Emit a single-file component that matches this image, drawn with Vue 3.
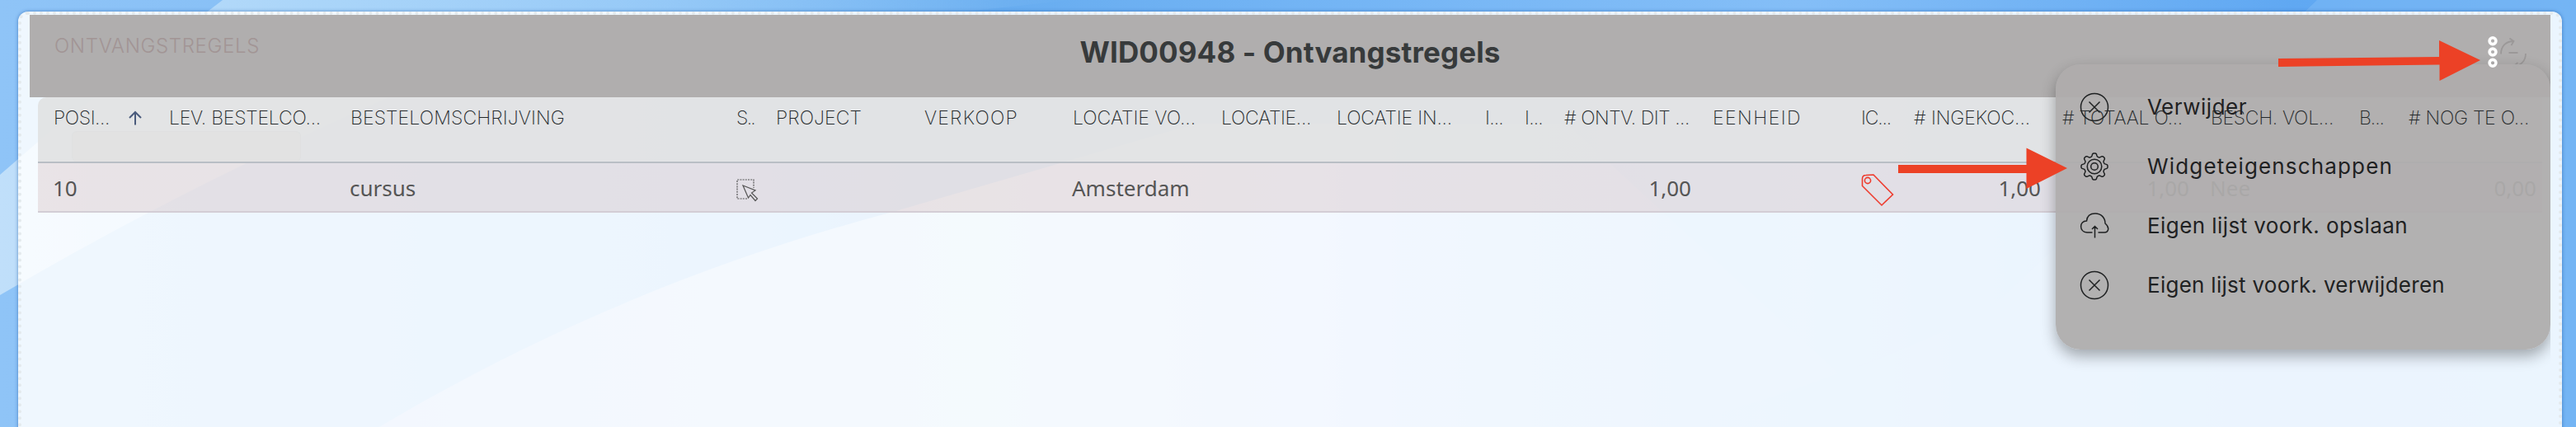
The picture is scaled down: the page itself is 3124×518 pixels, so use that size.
<template>
  <div class="page">
    <svg class="backdrop" viewBox="0 0 3124 518" preserveAspectRatio="none">
      <defs>
        <linearGradient id="sky" x1="0" y1="0" x2="1" y2="0">
          <stop offset="0" stop-color="#8fc4f7" />
          <stop offset="0.26" stop-color="#7cbaf5" />
          <stop offset="0.39" stop-color="#68adf0" />
          <stop offset="0.52" stop-color="#74b5f5" />
          <stop offset="0.7" stop-color="#84bef7" />
          <stop offset="0.89" stop-color="#60a8f2" />
          <stop offset="1" stop-color="#69aef3" />
        </linearGradient>
        <linearGradient id="band" x1="0" y1="0" x2="1" y2="0">
          <stop offset="0" stop-color="#c0dffa" />
          <stop offset="0.3" stop-color="#aad5f9" />
          <stop offset="1" stop-color="#aad5f9" stop-opacity="0" />
        </linearGradient>
        <linearGradient id="hill" x1="0" y1="0" x2="1" y2="0">
          <stop offset="0" stop-color="#a9c7f8" />
          <stop offset="0.4" stop-color="#b2d8f2" />
          <stop offset="0.62" stop-color="#a9c9fb" />
          <stop offset="1" stop-color="#90c6f8" stop-opacity="0" />
        </linearGradient>
      </defs>
      <rect width="3124" height="518" fill="url(#sky)" />
      <path d="M0 212 L60 160 L270 0 H1300 L560 80 Q260 205 0 358 Z" fill="url(#band)" />
      <path d="M460 518 Q750 345 1083 257 L1450 150 H1900 L2300 518 Z" fill="url(#hill)" />
      <path d="M2030 518 Q2330 430 2430 360 L2810 0 H3124 V518 Z" fill="#7fbcf6" opacity="0.5" />
    </svg>

    <section class="widget">
      <header class="widget-bar">
        <span class="widget-name" v-fit="249">ONTVANGSTREGELS</span>
        <h1 class="widget-title" v-fit="510">WID00948 - Ontvangstregels</h1>
        <svg class="refresh" viewBox="0 0 34 42" fill="none">
          <path d="M2 21.500 C2 12 8 6 17.500 6 M12.500 2.500 L17.500 6 L14.500 11 M32 21 C32 30 26 36 17 36.500 M22.500 32 L17 36.500 L22 40 M11.500 20 H22.500" />
        </svg>
      </header>

      <div class="grid">
        <div class="grid-row grid-head">
          <div v-for="(col, i) in columns" :key="i" class="cell">
            <span class="label" v-fit="col.width">{{ col.label }}</span>
            <svg v-if="col.sorted" class="sort" viewBox="0 0 18 18" fill="none">
              <path d="M9 17.5 V2 M2 9 L9 2 L16 9" />
            </svg>
          </div>
          <div class="filter"></div>
        </div>
        <div class="grid-row grid-body">
          <div v-for="(col, i) in columns" :key="i" class="cell" :class="{ number: col.number }">
            <svg v-if="col.icon === 'select'" class="select-icon" viewBox="0 0 27 28" fill="none">
              <path stroke-dasharray="2 1.2" d="M13 24 H1 V1 H21 V11" />
              <path d="M8 8 L23 14 L18.5 17 L25.5 24 L23 26.5 L17 19.5 L14.5 23 Z" />
            </svg>
            <svg v-else-if="col.icon === 'tag'" class="tag-icon" viewBox="0 0 40 40" fill="none">
              <path d="M1.5 6 Q1.5 1.5 6 1.5 L15 1 L38.5 25 L25 38 L1.5 14.5 Z" />
              <circle cx="8" cy="8" r="3.6" />
            </svg>
            <template v-else>{{ col.value }}</template>
          </div>
        </div>
      </div>

      <ul class="menu">
        <li v-for="item in menuItems" :key="item.label">
          <svg class="menu-icon" viewBox="0 0 36 36" fill="none">
            <template v-if="item.icon === 'close'">
              <circle cx="18" cy="18" r="16.5" />
              <path d="M11.5 11.5 L24.5 24.5 M24.5 11.5 L11.5 24.5" />
            </template>
            <template v-else-if="item.icon === 'gear'">
              <path :d="gearPath" />
              <circle cx="18" cy="18" r="8.8" />
              <circle cx="18" cy="18" r="4.3" />
            </template>
            <path v-else d="M15.5 26 H9 C-1 25 -.5 12 8.5 12 C9 6 13 3 19 3 C26 3 31 8 31 15 C37 20 35 26 30 26 H22.5 M18.5 32.5 V18.5 M15 22 L18.5 18.5 L22 22" />
          </svg>
          <span class="menu-label" v-fit="item.width">{{ item.label }}</span>
        </li>
      </ul>

      <svg class="dots" viewBox="0 0 14 42" fill="none">
        <circle cx="7" cy="7.7" r="3.9" />
        <circle cx="7" cy="21" r="3.9" />
        <circle cx="7" cy="34.3" r="3.9" />
      </svg>
    </section>

    <svg class="pointers" viewBox="0 0 3124 518">
      <path d="M2763 71 L2958 69 V49 L3008 73 L2958.500 98 V78.500 L2763 81 Z" />
      <path d="M2302 200 H2457.500 V179.500 L2507 204 L2457.500 229 V210 H2302 Z" />
    </svg>
  </div>
</template>

<script setup>
// spreads the letters so the text takes the given width
function fitText(el, { value }) {
  el.style.letterSpacing = '0px';
  const extra = value - el.getBoundingClientRect().width;
  el.style.letterSpacing = `${extra / el.textContent.length}px`;
}

const vFit = { mounted: fitText };

const columns = [
  { label: 'POSI...', width: 68, value: '10', sorted: true },
  { label: 'LEV. BESTELCO...', width: 184 },
  { label: 'BESTELOMSCHRIJVING', width: 260, value: 'cursus' },
  { label: 'S..', width: 22, icon: 'select' },
  { label: 'PROJECT', width: 104 },
  { label: 'VERKOOP', width: 114 },
  { label: 'LOCATIE VO...', width: 149, value: 'Amsterdam' },
  { label: 'LOCATIE...', width: 109 },
  { label: 'LOCATIE IN...', width: 140 },
  { label: 'I...', width: 22 },
  { label: 'I...', width: 22 },
  { label: '# ONTV. DIT ...', width: 152, value: '1,00', number: true },
  { label: 'EENHEID', width: 108 },
  { label: 'IC...', width: 36, icon: 'tag' },
  { label: '# INGEKOC...', width: 141, value: '1,00', number: true },
  { label: '# TOTAAL O...', width: 146, value: '1,00', number: true },
  { label: 'BESCH. VOL...', width: 149, value: 'Nee' },
  { label: 'B...', width: 30 },
  { label: '# NOG TE O...', width: 146, value: '0,00', number: true }
];

const menuItems = [
  { label: 'Verwijder', icon: 'close', width: 121 },
  { label: 'Widgeteigenschappen', icon: 'gear', width: 298 },
  { label: 'Eigen lijst voork. opslaan', icon: 'cloud', width: 316 },
  { label: 'Eigen lijst voork. verwijderen', icon: 'close', width: 361 }
];

const gearPath = makeGear();

function makeGear() {
  const points = [];
  for (let a = 0; a < 360; a += 3) {
    const wave = Math.cos((a * 8 * Math.PI) / 180);
    const r = 14.2 + 1.9 * Math.tanh(2 * wave);
    const t = (a * Math.PI) / 180;
    points.push(`${(18 + r * Math.sin(t)).toFixed(2)} ${(18 - r * Math.cos(t)).toFixed(2)}`);
  }
  return `M${points.join('L')}Z`;
}
</script>

<style>
body {
  margin: 0;
}
</style>

<style scoped>
.page {
  position: relative;
  width: 3124px;
  height: 518px;
  overflow: hidden;
  box-sizing: border-box;
  padding: 14px 17px 0 22px;
  font-family: Inter, "Open Sans", sans-serif;
}

.backdrop,
.pointers {
  position: absolute;
  left: 0;
  top: 0;
  width: 3124px;
  height: 518px;
}

.pointers {
  fill: #ec4126;
  z-index: 5;
}

.widget {
  position: relative;
  height: 560px;
  border: 4px dotted #e4eaed;
  border-radius: 12px;
  background: rgba(255, 255, 255, 0.86);
  background-clip: border-box;
  box-shadow: 0 0 4px rgba(20, 80, 160, 0.6);
}

.widget-bar {
  position: relative;
  height: 100px;
  margin: 0 10px;
  background: #b0aeae;
  display: flex;
  justify-content: center;
}

.widget-name {
  position: absolute;
  left: 30px;
  top: 22px;
  font-size: 24px;
  line-height: 32px;
  font-weight: 300;
  color: #a29595;
}

.widget-title {
  margin: 21px 0 0;
  height: 48px;
  line-height: 48px;
  font-size: 35px;
  font-weight: 700;
  color: #373a3b;
  white-space: nowrap;
}

.refresh {
  position: absolute;
  right: 28px;
  top: 26px;
  width: 34px;
  height: 42px;
  stroke: #9b9898;
  stroke-width: 1.8;
}

.grid {
  margin: 0 20px;
}

.grid-row {
  display: grid;
  grid-template-columns:
    140px 220px 468px 48px 180px 180px 180px 140px 180px 48px
    48px 180px 180px 64px 180px 180px 180px 60px 181px;
}

.grid-head {
  position: relative;
  height: 78px;
  background: rgba(222, 222, 222, 0.8);
  border-bottom: 2px solid #b9bec5;
  border-top-left-radius: 10px;
}

.cell {
  box-sizing: border-box;
  padding-left: 19px;
  white-space: nowrap;
}

.grid-head .cell {
  display: flex;
  justify-content: space-between;
  height: 36px;
  margin-top: 8px;
  font-size: 23px;
  line-height: 35px;
  font-weight: 200;
  color: #24282a;
}

.label {
  position: relative;
  z-index: 2;
}

.sort {
  width: 18px;
  height: 18px;
  margin: 8px 13px 0 0;
  stroke: #4a5b7c;
  stroke-width: 2;
}

.filter {
  position: absolute;
  left: 41px;
  top: 41px;
  width: 276px;
  height: 36px;
  border: 1px solid #dfe0e1;
  border-bottom: none;
  border-radius: 6px;
  background: #e2e2e2;
}

.grid-body {
  height: 58px;
  background: rgba(194, 160, 160, 0.25);
  border-bottom: 2px solid #d3cdd5;
  font-family: "Noto Sans", sans-serif;
  font-size: 26px;
  line-height: 60px;
  color: #555;
}

.grid-body .cell {
  padding-left: 18px;
}

.grid-body .number {
  text-align: right;
  padding-right: 7px;
}

.select-icon {
  display: block;
  width: 27px;
  height: 28px;
  margin: 19px 0 0 1px;
  stroke: #555;
  stroke-width: 1.2;
}

.tag-icon {
  display: block;
  width: 40px;
  height: 40px;
  margin: 13px 0 0 1px;
  stroke: #ee3c2e;
  stroke-width: 1.6;
}

.menu {
  position: absolute;
  left: 2467px;
  top: 60px;
  z-index: 1;
  box-sizing: border-box;
  width: 600px;
  height: 346px;
  margin: 0;
  padding: 16px 0 0 29px;
  list-style: none;
  background: rgba(174, 172, 172, 0.94);
  border-radius: 30px;
  box-shadow: 0 8px 18px rgba(0, 0, 0, 0.32);
  clip-path: inset(-40px 0 -40px -40px);
}

.menu li {
  display: flex;
  align-items: center;
  gap: 46px;
  height: 72px;
  font-size: 26px;
  color: #1f2122;
  white-space: nowrap;
}

.menu-icon {
  width: 36px;
  height: 36px;
  stroke: #1f2122;
  stroke-width: 1.5;
}

.menu-label {
  margin-top: -2px;
}

.dots {
  position: absolute;
  left: 2990px;
  top: 24px;
  z-index: 3;
  width: 14px;
  height: 42px;
  stroke: #fff;
  stroke-width: 3.6;
}
</style>
